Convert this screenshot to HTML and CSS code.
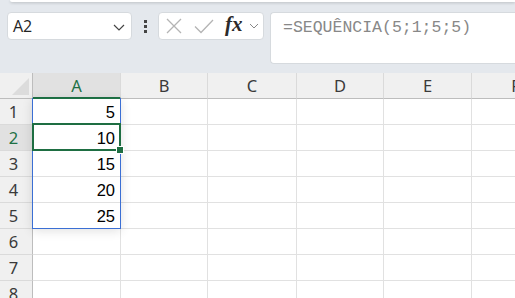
FILE: index.html
```html
<!DOCTYPE html>
<html lang="pt">
<head>
    <meta charset="UTF-8">
    <title>SEQUÊNCIA</title>
    <link rel="stylesheet" href="styles.css">
</head>
<body>
    <div class="ribbon-edge"></div>

    <div class="toolbar">
        <div class="name-box">
            <span>A2</span>
            <svg class="chev" width="12" height="7" viewBox="0 0 12 7"><path d="M1 1l5 5 5-5" fill="none" stroke="#444" stroke-width="1.2"/></svg>
        </div>
        <div class="dots"><i></i><i></i><i></i></div>
        <div class="fx-buttons">
            <svg width="16" height="16" viewBox="0 0 16 16"><path d="M1 1l14 14M15 1L1 15" stroke="#b4b4b4" stroke-width="1.3" fill="none"/></svg>
            <svg width="20" height="15" viewBox="0 0 20 15"><path d="M1 7.5l6 6L19 1" stroke="#b4b4b4" stroke-width="1.3" fill="none"/></svg>
            <span class="fx">fx</span>
            <svg width="10" height="6" viewBox="0 0 10 6"><path d="M1 1l4 4 4-4" fill="none" stroke="#888" stroke-width="1"/></svg>
        </div>
        <div class="formula-bar">=SEQUÊNCIA(5;1;5;5)</div>
    </div>

    <div class="sheet">
        <div class="corner"><div class="tri"></div></div>
        <div class="col-head active">A</div>
        <div class="col-head">B</div>
        <div class="col-head">C</div>
        <div class="col-head">D</div>
        <div class="col-head">E</div>
        <div class="col-head">F</div>

        <div class="row-head">1</div><div class="cell">5</div><div class="cell"></div><div class="cell"></div><div class="cell"></div><div class="cell"></div><div class="cell"></div>
        <div class="row-head active">2</div><div class="cell">10</div><div class="cell"></div><div class="cell"></div><div class="cell"></div><div class="cell"></div><div class="cell"></div>
        <div class="row-head">3</div><div class="cell">15</div><div class="cell"></div><div class="cell"></div><div class="cell"></div><div class="cell"></div><div class="cell"></div>
        <div class="row-head">4</div><div class="cell">20</div><div class="cell"></div><div class="cell"></div><div class="cell"></div><div class="cell"></div><div class="cell"></div>
        <div class="row-head">5</div><div class="cell">25</div><div class="cell"></div><div class="cell"></div><div class="cell"></div><div class="cell"></div><div class="cell"></div>
        <div class="row-head">6</div><div class="cell"></div><div class="cell"></div><div class="cell"></div><div class="cell"></div><div class="cell"></div><div class="cell"></div>
        <div class="row-head">7</div><div class="cell"></div><div class="cell"></div><div class="cell"></div><div class="cell"></div><div class="cell"></div><div class="cell"></div>
        <div class="row-head">8</div><div class="cell"></div><div class="cell"></div><div class="cell"></div><div class="cell"></div><div class="cell"></div><div class="cell"></div>

        <div class="spill"></div>
        <div class="selection"><div class="handle"></div></div>
    </div>
</body>
</html>
```

FILE: styles.css
```css
body {
    margin: 0;
    background: #e4e8ed;
    font-family: 'Open Sans', 'Liberation Sans', sans-serif;
    overflow: hidden;
    height: 298px;
}

.ribbon-edge {
    height: 2px;
    margin-left: 10px;
    background: #fff;
    border-bottom-left-radius: 4px;
    box-shadow: 0 1px 3px rgba(0, 0, 0, 0.2);
}

.toolbar {
    display: flex;
    align-items: flex-start;
    padding: 10px 0 0 7px;
    height: 61px;
}

.name-box {
    width: 125px;
    height: 28px;
    box-sizing: border-box;
    background: #fff;
    border: 1px solid #d6dade;
    border-radius: 4px;
    display: flex;
    align-items: center;
    justify-content: space-between;
    padding: 0 6px 0 5px;
    font-size: 16px;
    color: #242424;
}

.name-box .chev {
    margin-top: 2px;
}

.dots {
    width: 26px;
    height: 28px;
    display: flex;
    flex-direction: column;
    align-items: center;
    justify-content: center;
    gap: 2px;
}

.dots i {
    width: 3px;
    height: 3px;
    background: #444;
}

.fx-buttons {
    width: 106px;
    height: 28px;
    box-sizing: border-box;
    background: #fff;
    border: 1px solid #d6dade;
    border-radius: 4px;
    display: flex;
    align-items: center;
    padding: 0 0 0 7px;
    gap: 12px;
}

.fx-buttons .fx {
    font-family: 'Liberation Serif', serif;
    font-style: italic;
    font-weight: bold;
    font-size: 21px;
    color: #2b2b2b;
    margin-left: -1px;
    margin-right: -6px;
    margin-top: -3px;
}

.formula-bar {
    margin-left: 6px;
    flex: 1;
    height: 52px;
    box-sizing: border-box;
    background: #fff;
    border: 1px solid #d6dade;
    border-right: none;
    border-radius: 4px 0 0 4px;
    padding: 5px 0 0 12px;
    font-family: 'Liberation Mono', monospace;
    font-size: 16.5px;
    color: #888;
}

.sheet {
    position: relative;
    display: grid;
    grid-template-columns: 33px 88px 87px 89px 87px 88px 88px;
    grid-auto-rows: 26px;
    background: #fff;
    overflow: hidden;
}

.corner,
.col-head {
    background: #f0f0f0;
    border-bottom: 1px solid #bdbdbd;
    box-sizing: border-box;
}

.corner {
    border-right: 1px solid #bdbdbd;
    position: relative;
}

.corner .tri {
    position: absolute;
    right: 3px;
    bottom: 3px;
    width: 17px;
    height: 17px;
    background: #dcdcdc;
    clip-path: polygon(100% 0, 100% 100%, 0 100%);
}

.col-head {
    border-right: 1px solid #dadada;
    display: flex;
    align-items: center;
    justify-content: center;
    font-family: 'Noto Sans', sans-serif;
    font-size: 16.5px;
    color: #3a3a3a;
}

.col-head.active {
    background: #e1e1e1;
    color: #1e7145;
    border-bottom: 2px solid #1e7145;
}

.row-head {
    background: #f0f0f0;
    border-right: 1px solid #bdbdbd;
    border-bottom: 1px solid #dadada;
    box-sizing: border-box;
    display: flex;
    align-items: center;
    justify-content: center;
    padding-right: 5px;
    font-family: 'Noto Sans', sans-serif;
    font-size: 16.5px;
    color: #3a3a3a;
}

.row-head.active {
    background: #e1e1e1;
    color: #1e7145;
}

.cell {
    border-right: 1px solid #e1e1e1;
    border-bottom: 1px solid #e1e1e1;
    box-sizing: border-box;
    display: flex;
    align-items: flex-end;
    justify-content: flex-end;
    padding: 0 5px 2px 0;
    font-family: 'Liberation Sans', sans-serif;
    font-size: 16.5px;
    color: #000;
}

.spill {
    position: absolute;
    left: 32px;
    top: 25px;
    width: 89px;
    height: 131px;
    box-sizing: border-box;
    border: 1px solid #3b6fd4;
    border-top: none;
    box-shadow: 0 2px 10px rgba(0, 0, 0, 0.12);
}

.selection {
    position: absolute;
    left: 32px;
    top: 50px;
    width: 89px;
    height: 28px;
    box-sizing: border-box;
    border: 2px solid #1e6e42;
}

.selection .handle {
    position: absolute;
    right: -5px;
    bottom: -5px;
    width: 6px;
    height: 6px;
    background: #1e6e42;
    border: 1px solid #fff;
}
```
